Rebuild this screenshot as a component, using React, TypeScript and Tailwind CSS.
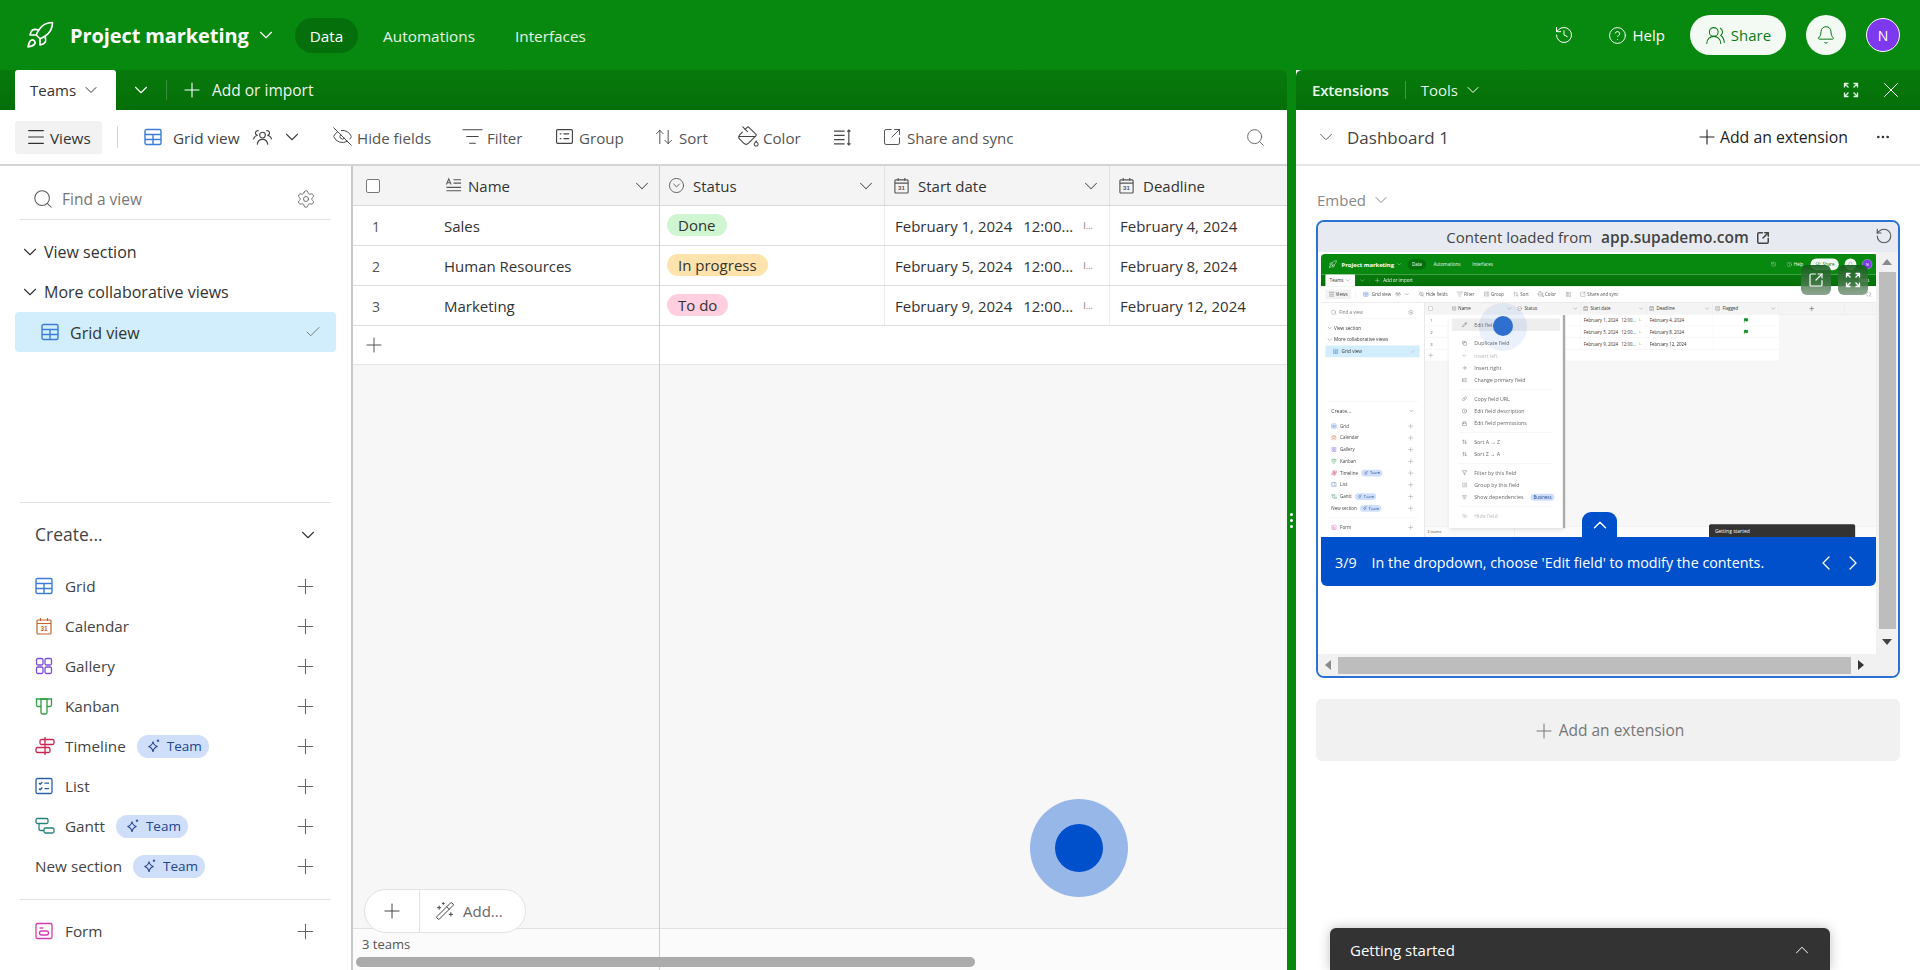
import React from "react";
import {
  Rocket, ChevronDown, ChevronUp, ChevronLeft, ChevronRight, Plus, Menu, UsersRound, EyeOff, ListFilter, ArrowUpDown, PaintBucket,
  Search, Settings, History, CircleHelp, Bell, X, Check, WandSparkles, Ellipsis, RotateCcw, CircleChevronDown, SquareArrowOutUpRight,
  Pencil, Copy, ArrowLeft, ArrowRight, Link, Info, Lock, Filter, ListTree, Flag,
} from "lucide-react";

type IP = { className?: string };

const GridIcon = ({ className }: IP) => (
  <svg viewBox="0 0 18 18" className={className} fill="none" stroke="currentColor" strokeWidth="1.4">
    <rect x="1" y="1.500" width="16" height="15" rx="1.500" />
    <path d="M1 6.500h16M1 11.500h16M9 6.500v10" />
  </svg>
);
const CalIcon = ({ className }: IP) => (
  <svg viewBox="0 0 18 18" className={className} fill="none" stroke="currentColor" strokeWidth="1.2">
    <rect x="2" y="3" width="14" height="14" rx="1" />
    <path d="M2 6.500h14M5.500 1v3M12.500 1v3" />
    <text x="9" y="14" textAnchor="middle" fontSize="6.5" fontWeight="700" fill="currentColor" stroke="none" fontFamily="Liberation Sans, sans-serif">31</text>
  </svg>
);
const GalleryIcon = ({ className }: IP) => (
  <svg viewBox="0 0 18 18" className={className} fill="none" stroke="currentColor" strokeWidth="1.3">
    <rect x="1.500" y="1.500" width="6.500" height="6.500" rx="1.500" />
    <rect x="10" y="1.500" width="6.500" height="6.500" rx="1.500" />
    <rect x="1.500" y="10" width="6.500" height="6.500" rx="1.500" />
    <rect x="10" y="10" width="6.500" height="6.500" rx="1.500" />
  </svg>
);
const KanbanIcon = ({ className }: IP) => (
  <svg viewBox="0 0 18 18" className={className} fill="none" stroke="currentColor" strokeWidth="1.3">
    <path d="M6 9.500H3A1.500 1.500 0 0 1 1.500 8V2h15v6a1.500 1.500 0 0 1-1.500 1.500h-3" />
    <path d="M6 2h6v13.500a1.500 1.500 0 0 1-1.500 1.500h-3A1.500 1.500 0 0 1 6 15.500z" />
  </svg>
);
const TimelineIcon = ({ className }: IP) => (
  <svg viewBox="0 0 20 20" className={className} fill="none" stroke="currentColor" strokeWidth="1.3">
    <path d="M10 1v18" />
    <rect x="5" y="3.500" width="14" height="5" rx="1.500" />
    <rect x="1" y="11.500" width="14" height="5" rx="1.500" />
  </svg>
);
const ListIcon = ({ className }: IP) => (
  <svg viewBox="0 0 18 18" className={className} fill="none" stroke="currentColor" strokeWidth="1.3">
    <rect x="1" y="1.500" width="16" height="15" rx="1.500" />
    <path d="M4 6l1.200 1.200L7.300 5M4 11.500l1.200 1.200 2.100-2.200M9.500 6.200h4.500M9.500 11.700h4.500" />
  </svg>
);
const GanttIcon = ({ className }: IP) => (
  <svg viewBox="0 0 20 18" className={className} fill="none" stroke="currentColor" strokeWidth="1.3">
    <rect x="1" y="1.500" width="12" height="5" rx="1.500" />
    <rect x="9" y="11" width="10" height="5" rx="1.500" />
    <path d="M4 6.500v5a2 2 0 0 0 2 2h3" />
  </svg>
);
const FormIcon = ({ className }: IP) => (
  <svg viewBox="0 0 18 18" className={className} fill="none" stroke="currentColor" strokeWidth="1.3">
    <rect x="1" y="1.500" width="16" height="15" rx="1.500" />
    <path d="M4.500 6h4" />
    <rect x="4.500" y="9" width="9" height="4" rx="2" />
  </svg>
);
const Spark = ({ className }: IP) => (
  <svg viewBox="0 0 16 16" className={className} fill="none" stroke="currentColor" strokeWidth="1.100">
    <path d="M7 3.500c.5 3 1.700 4.300 4.500 5-2.800.7-4 2-4.500 5.500-.5-3.500-1.700-4.800-4.500-5.500 2.800-.7 4-2 4.500-5z" />
    <path d="M12 1.500v2.500M10.800 2.700h2.400" />
  </svg>
);
const GroupIcon = ({ className }: IP) => (
  <svg viewBox="0 0 18 18" className={className} fill="none" stroke="currentColor" strokeWidth="1.200">
    <rect x="1.500" y="2.500" width="15" height="13" rx="1" />
    <path d="M4.500 6.500h1.500M8 6.500h5.500M4.500 11h1.500M8 11h5.500" />
  </svg>
);
const RowHeightIcon = ({ className }: IP) => (
  <svg viewBox="0 0 18 18" className={className} fill="none" stroke="currentColor" strokeWidth="1.200">
    <path d="M1 3h10M1 7h10M1 11h10M1 15h10M15 2v14M13.500 3.500L15 2l1.500 1.500M13.500 14.500L15 16l1.500-1.500" />
  </svg>
);
const TextFieldIcon = ({ className }: IP) => (
  <svg viewBox="0 0 18 18" className={className} fill="none" stroke="currentColor" strokeWidth="1.100">
    <path d="M1.500 8L4 2l2.500 6M2.500 6h3M9 3h8M9 6.500h8M1.500 11h15.500M1.500 14.500h15.500" />
  </svg>
);
const ExpandIcon = ({ className }: IP) => (
  <svg viewBox="0 0 16 16" className={className} fill="none" stroke="currentColor" strokeWidth="1.300">
    <path d="M1.500 5.500v-4h4M1.500 1.500l4 4M10.500 1.500h4v4M14.500 1.500l-4 4M1.500 10.500v4h4M1.500 14.500l4-4M14.500 10.500v4h-4M14.500 14.500l-4-4" />
  </svg>
);
const PeopleIcon = ({ className }: IP) => (
  <svg viewBox="0 0 22 18" className={className} fill="none" stroke="currentColor" strokeWidth="1.200">
    <circle cx="11" cy="7" r="3" />
    <path d="M5.500 17c.3-3.500 2.500-5.500 5.500-5.500s5.200 2 5.500 5.500" />
    <path d="M7 2.600a2.400 2.400 0 1 0-1 4.600c-2.200.3-4 1.800-4.500 4.300" />
    <path d="M15 2.600a2.400 2.400 0 1 1 1 4.600c2.200.3 4 1.800 4.500 4.300" />
  </svg>
);

const chev = "w-[22px] h-[22px] stroke-[1.2]";
const plusSide = "ml-auto w-[25px] h-[25px] stroke-[1] text-[#666] -mr-[4px]";

function TeamPill() {
  return (
    <span className="flex items-center gap-[5px] h-[23px] w-[72px] pl-[9px] rounded-full bg-[#cfdffa] text-[13.5px] text-[#23468f]">
      <Spark className="w-[16px] h-[16px] shrink-0" />
      Team
    </span>
  );
}

const createItems: { label: string; icon: React.ReactNode; team?: boolean }[] = [
  { label: "Grid", icon: <GridIcon className="w-[18px] h-[18px] text-[#3b7dd8]" /> },
  { label: "Calendar", icon: <CalIcon className="w-[18px] h-[18px] text-[#c7622c]" /> },
  { label: "Gallery", icon: <GalleryIcon className="w-[18px] h-[18px] text-[#7c4ddb]" /> },
  { label: "Kanban", icon: <KanbanIcon className="w-[18px] h-[18px] text-[#2f9e44]" /> },
  { label: "Timeline", icon: <TimelineIcon className="w-[20px] h-[20px] text-[#c92552]" />, team: true },
  { label: "List", icon: <ListIcon className="w-[18px] h-[18px] text-[#2c5fa8]" /> },
  { label: "Gantt", icon: <GanttIcon className="w-[20px] h-[18px] text-[#26847a]" />, team: true },
];

function Sidebar() {
  return (
    <aside className="w-[353px] shrink-0 border-r-2 border-[#c9c9c9] bg-white flex flex-col text-[#333]">
      <div className="mx-[20px] h-[54px] pt-[13px] border-b border-[#e3e3e3]">
        <div className="h-[40px] flex items-center pl-[12px] pr-[15px]">
          <Search className="w-[22px] h-[22px] stroke-[1.1] text-[#555]" />
          <span className="ml-[8px] pt-[1px] flex-1 text-[15.5px] text-[#777]">Find a view</span>
          <Settings className="w-[20px] h-[20px] stroke-[1.1] text-[#666]" />
        </div>
      </div>
      <div className="mt-[12px] h-[40px] flex items-center pl-[19px] text-[16px] text-[#333]">
        <ChevronDown className={chev} />
        <span className="ml-[3px]">View section</span>
      </div>
      <div className="h-[40px] flex items-center pl-[19px] text-[16px] text-[#333]">
        <ChevronDown className={chev} />
        <span className="ml-[3px]">More collaborative views</span>
      </div>
      <div className="mx-[15px] w-[321px] h-[40px] rounded-[4px] bg-[#d2eefc] flex items-center pl-[26px] pr-[14px] text-[16px]">
        <GridIcon className="w-[18px] h-[18px] text-[#3b7dd8]" />
        <span className="ml-[11px] pt-[1px] flex-1">Grid view</span>
        <Check className="w-[18px] h-[18px] stroke-[1.1] text-[#666]" />
      </div>
      <div className="flex-1" />
      <div className="mx-[20px] border-t border-[#e3e3e3]" />
      <div className="h-[63px] flex items-center justify-between pl-[35px] pr-[32px]">
        <span className="text-[17.5px] font-medium text-[#444]">Create...</span>
        <ChevronDown className={chev} />
      </div>
      {createItems.map((it) => (
        <div key={it.label} className="h-[40px] flex items-center pl-[35px] pr-[37px] text-[15.3px] text-[#444]">
          <span className="w-[30px] shrink-0">{it.icon}</span>
          <span className="mr-[11px]">{it.label}</span>
          {it.team && <TeamPill />}
          <Plus className={plusSide} />
        </div>
      ))}
      <div className="h-[40px] flex items-center pl-[35px] pr-[37px] text-[15.3px] text-[#444]">
        <span className="mr-[11px]">New section</span>
        <TeamPill />
        <Plus className={plusSide} />
      </div>
      <div className="mx-[20px] mt-[13px] border-t border-[#e3e3e3]" />
      <div className="mt-[11px] mb-[19px] h-[40px] flex items-center pl-[35px] pr-[37px] text-[15.3px] text-[#444]">
        <span className="w-[30px] shrink-0"><FormIcon className="w-[18px] h-[18px] text-[#d63bab]" /></span>
        <span>Form</span>
        <Plus className={plusSide} />
      </div>
    </aside>
  );
}

function ToolItem({ icon, label, w }: { icon: React.ReactNode; label?: string; w: string }) {
  return (
    <div className={"flex items-center shrink-0 " + w}>
      <span className="w-[24px] h-[24px] flex items-center justify-center shrink-0">{icon}</span>
      {label && <span className="ml-[3px] pt-[2px] whitespace-nowrap">{label}</span>}
    </div>
  );
}

function Toolbar() {
  const ic = "stroke-[1.1] text-[#444]";
  return (
    <div className="h-[56px] shrink-0 bg-white border-b-2 border-[#d4d4d4] flex items-center text-[15.1px] text-[#555]">
      <div className="ml-[15px] w-[87px] h-[33px] rounded-[3px] bg-[#f2f2f2] flex items-center pl-[10px] gap-[3px] text-[15.3px] text-[#333]">
        <Menu className="w-[22px] h-[22px] stroke-[1.300]" />
        <span className="pt-[2px]">Views</span>
      </div>
      <div className="ml-[15px] w-px h-[22px] bg-[#d4d4d4]" />
      <GridIcon className="ml-[26px] w-[18px] h-[18px] text-[#3b7dd8]" />
      <span className="ml-[11px] w-[70px] pt-[2px] text-[15.3px] font-medium text-[#444] whitespace-nowrap">Grid view</span>
      <PeopleIcon className="ml-[9px] w-[21px] h-[18px] text-[#444]" />
      <ChevronDown className="ml-[8px] w-[22px] h-[22px] stroke-[1.2] text-[#444]" />
      <div className="ml-[27px]" />
      <ToolItem w="w-[130px]" icon={<EyeOff className={"w-[21px] h-[21px] " + ic} />} label="Hide fields" />
      <ToolItem w="w-[92px]" icon={<ListFilter className={"w-[23px] h-[23px] " + ic} />} label="Filter" />
      <ToolItem w="w-[100px]" icon={<GroupIcon className={"w-[19px] h-[19px] " + ic} />} label="Group" />
      <ToolItem w="w-[84px]" icon={<ArrowUpDown className={"w-[20px] h-[20px] " + ic} />} label="Sort" />
      <ToolItem w="w-[94px]" icon={<PaintBucket className={"w-[23px] h-[23px] " + ic} />} label="Color" />
      <ToolItem w="w-[50px]" icon={<RowHeightIcon className={"w-[19px] h-[19px] " + ic} />} />
      <ToolItem w="w-[150px]" icon={<SquareArrowOutUpRight className={"w-[20px] h-[20px] " + ic} />} label="Share and sync" />
      <Search className="ml-auto mr-[21px] w-[21px] h-[21px] stroke-[1.1] text-[#666]" />
    </div>
  );
}

const rows = [
  { n: 1, name: "Sales", status: "Done", cls: "bg-[#cff5d1]", start: "February 1, 2024", dead: "February 4, 2024", flag: true },
  { n: 2, name: "Human Resources", status: "In progress", cls: "bg-[#ffe3ac]", start: "February 5, 2024", dead: "February 8, 2024", flag: true },
  { n: 3, name: "Marketing", status: "To do", cls: "bg-[#ffcfe0]", start: "February 9, 2024", dead: "February 12, 2024", flag: false },
];

function HeadCell({ w, icon, label }: { w: string; icon: React.ReactNode; label: string }) {
  return (
    <div className={"shrink-0 h-full flex items-center pl-[8px] pr-[7px] border-r border-[#e0e0e0] " + w}>
      {icon}
      <span className="ml-[8px] flex-1 pt-[2px] text-[#333]">{label}</span>
      <ChevronDown className="w-[22px] h-[22px] stroke-[1.1] text-[#555]" />
    </div>
  );
}

function GridTable({ mini = false }: { mini?: boolean }) {
  const ic = "w-[17px] h-[17px] text-[#555]";
  return (
    <div className="flex-1 min-w-0 flex bg-[#f7f7f7] text-[15px] text-[#333] overflow-hidden">
      <div className="w-[307px] shrink-0 flex flex-col border-r border-[#cfcfcf]">
        <div className="h-[40px] shrink-0 bg-[#f4f4f4] border-b border-[#d8d8d8] flex items-center">
          <span className="ml-[13px] w-[14px] h-[14px] rounded-[2px] border border-[#777] bg-white" />
          <span className="ml-[65px] w-[18px]"><TextFieldIcon className="w-[17px] h-[17px] text-[#555]" /></span>
          <span className="ml-[5px] flex-1 pt-[2px] text-[#333]">Name</span>
          <ChevronDown className="mr-[6px] w-[22px] h-[22px] stroke-[1.1] text-[#555]" />
        </div>
        {rows.map((r) => (
          <div key={r.n} className="h-[40px] shrink-0 bg-white border-b border-[#dedede] flex items-center">
            <span className="w-[91px] pl-[19px] pt-[1px] text-[14px] text-[#555]">{r.n}</span>
            <span className="pt-[1px]">{r.name}</span>
          </div>
        ))}
        <div className="h-[39px] shrink-0 bg-white border-b border-[#e5e5e5] flex items-center pl-[9px]">
          <Plus className="w-[24px] h-[24px] stroke-[1] text-[#555]" />
        </div>
        <div className="flex-1" />
        <div className="h-[42px] shrink-0 bg-[#fbfbfb] border-t border-[#e0e0e0] pl-[9px] pt-[6px] text-[13px] text-[#555]">3 teams</div>
      </div>
      <div className="flex-1 min-w-0 flex flex-col overflow-hidden">
        <div className="h-[40px] shrink-0 bg-[#f4f4f4] border-b border-[#d8d8d8] flex items-center">
          <HeadCell w="w-[225px]" icon={<CircleChevronDown className={ic + " stroke-[1.25]"} />} label="Status" />
          <HeadCell w="w-[225px]" icon={<CalIcon className={ic} />} label="Start date" />
          {mini ? (
            <>
              <HeadCell w="w-[225px]" icon={<CalIcon className={ic} />} label="Deadline" />
              <HeadCell w="w-[225px]" icon={<GroupIcon className={ic} />} label="Flagged" />
              <div className="w-[224px] h-full border-r border-[#e0e0e0] flex items-center justify-center"><Plus className="w-[22px] h-[22px] text-[#555]" /></div>
            </>
          ) : (
            <div className="flex items-center pl-[8px] shrink-0 w-[180px]">
              <CalIcon className={ic} />
              <span className="ml-[8px] pt-[2px]">Deadline</span>
            </div>
          )}
        </div>
        {rows.map((r) => (
          <div key={r.n} className={"h-[40px] shrink-0 bg-white border-b border-[#dedede] flex items-center " + (mini ? "w-[900px]" : "")}>
            <div className="w-[225px] h-full shrink-0 pl-[7px] pt-[8px] border-r border-[#ececec]">
              <span className={"inline-flex items-center h-[22px] px-[11px] rounded-full text-[#333] " + r.cls}>{r.status}</span>
            </div>
            <div className="w-[225px] h-full shrink-0 flex items-center pl-[10px] pt-[1px] border-r border-[#ececec] whitespace-nowrap overflow-hidden">
              <span>{r.start}</span>
              <span className="ml-[11px]">12:00...</span>
              <span className="ml-[10px] text-[9px] text-[#777]">I...</span>
            </div>
            <div className="pl-[10px] pt-[1px] whitespace-nowrap shrink-0 w-[225px]">{r.dead}</div>
            {mini && (
              <div className="w-[225px] h-full flex items-center justify-center border-l border-[#ececec]">
                {r.flag && <Flag className="w-[18px] h-[18px] text-[#0a8a1a] fill-[#0a8a1a]" />}
              </div>
            )}
          </div>
        ))}
        <div className={"h-[39px] shrink-0 bg-white border-b border-[#e5e5e5] " + (mini ? "w-[900px]" : "")} />
        <div className="flex-1" />
        <div className="h-[42px] shrink-0 bg-[#fbfbfb] border-t border-[#e0e0e0]" />
      </div>
    </div>
  );
}

function Brand() {
  return (
    <>
      <Rocket className="ml-[25px] w-[30px] h-[30px] stroke-[1.3] text-white" />
      <span className="ml-[15px] w-[180px] pt-[1px] text-[20px] font-bold tracking-[-0.1px] text-white whitespace-nowrap">Project marketing</span>
      <ChevronDown className="ml-[5px] w-[22px] h-[22px] stroke-[1.2] text-white" />
      <div className="ml-[18px] w-[63px] h-[35px] pt-[3px] rounded-full bg-[#056f0b] flex items-center justify-center text-[15.3px] text-white">Data</div>
      <span className="ml-[25px] w-[92px] pt-[2px] text-[15.3px] tracking-[0.05px] text-white/90">Automations</span>
      <span className="ml-[40px] pt-[2px] text-[15.3px] text-white/90">Interfaces</span>
    </>
  );
}

function TopRight() {
  return (
    <>
      <History className="ml-auto w-[20px] h-[20px] stroke-[1.2] text-white" />
      <CircleHelp className="ml-[34px] w-[19px] h-[19px] stroke-[1.2] text-white" />
      <span className="ml-[6px] pt-[1px] text-[15px] text-white">Help</span>
      <div className="ml-[25px] w-[96px] h-[40px] pt-[1px] rounded-full bg-[#f3f9f3] flex items-center justify-center gap-[5px] text-[15px] text-[#0b7a16]">
        <UsersRound className="w-[21px] h-[21px] stroke-[1.2]" />
        Share
      </div>
      <div className="ml-[20px] w-[40px] h-[40px] rounded-full bg-[#f3f9f3] flex items-center justify-center">
        <Bell className="w-[20px] h-[20px] stroke-[1.2] text-[#0b7a16]" />
      </div>
      <div className="ml-[20px] mr-[20px] w-[34px] h-[34px] rounded-full bg-[#7c39ed] border border-white flex items-center justify-center text-[14px] text-white">N</div>
    </>
  );
}

function SubBarLeft() {
  return (
    <>
      <div className="ml-[15px] w-[101px] h-[40px] rounded-t-[3px] bg-white flex items-center pl-[15px] text-[15px] text-[#333]">
        <span className="pt-[1px]">Teams</span>
        <ChevronDown className="ml-[5px] w-[20px] h-[20px] stroke-[1.2]" />
      </div>
      <ChevronDown className="ml-[14px] w-[22px] h-[22px] stroke-[1.2] text-white" />
      <div className="ml-[14px] w-px h-[20px] bg-white/20" />
      <Plus className="ml-[13px] w-[24px] h-[24px] stroke-[1.1] text-white" />
      <span className="ml-[8px] pt-[1px] text-[15.5px] text-white/95">Add or import</span>
    </>
  );
}

function MiniMenu() {
  const s = "w-[18px] h-[18px] shrink-0";
  const item = (ic: React.ReactNode, t: string, hl = false, extra?: React.ReactNode, dim = false) => (
    <div key={t} className={"h-[42px] flex items-center gap-[24px] px-[34px] mx-[10px] text-[18px] whitespace-nowrap rounded " + (hl ? "bg-[#eeeeee] " : "") + (dim ? "text-[#bbb]" : "text-[#666]")}>
      {ic}
      <span>{t}</span>
      {extra}
    </div>
  );
  const sep = <div className="mx-[34px] my-[10px] border-t border-[#e3e3e3]" />;
  return (
    <div className="absolute left-[436px] top-[208px] w-[396px] h-[726px] bg-white shadow-lg overflow-hidden pt-[12px] border-r-[8px] border-[#aaa]">
      {item(<Pencil className={s} />, "Edit field", true)}
      <div className="h-[21px]" />
      {item(<Copy className={s} />, "Duplicate field")}
      {item(<ArrowLeft className={s} />, "Insert left", false, undefined, true)}
      {item(<ArrowRight className={s} />, "Insert right")}
      {item(<ListTree className={s} />, "Change primary field")}
      {sep}
      {item(<Link className={s} />, "Copy field URL")}
      {item(<Info className={s} />, "Edit field description")}
      {item(<Lock className={s} />, "Edit field permissions")}
      {sep}
      {item(<ArrowUpDown className={s} />, "Sort A → Z")}
      {item(<ArrowUpDown className={s} />, "Sort Z → A")}
      {sep}
      {item(<Filter className={s} />, "Filter by this field")}
      {item(<GroupIcon className={s} />, "Group by this field")}
      {item(<ListFilter className={s} />, "Show dependencies", false,
        <span className="ml-auto h-[24px] px-[10px] rounded-full bg-[#cfdffa] text-[15px] text-[#23468f]">Business</span>)}
      {sep}
      {item(<EyeOff className={s} />, "Hide field", false, undefined, true)}
    </div>
  );
}

function MiniApp() {
  return (
    <div className="relative w-[1898px] h-[970px] origin-top-left scale-[0.2935] bg-white flex flex-col blur-[0.9px] rounded-t-[14px] overflow-hidden">
      <div className="h-[70px] shrink-0 bg-[#07880f] flex items-center">
        <Brand />
        <TopRight />
      </div>
      <div className="h-[40px] shrink-0 bg-gradient-to-b from-[#077a0c] to-[#056f08] flex items-center">
        <SubBarLeft />
        <span className="ml-auto mr-[30px] text-[15px] text-white">Tools</span>
      </div>
      <Toolbar />
      <div className="flex-1 min-h-0 flex">
        <Sidebar />
        <GridTable mini />
      </div>
      <MiniMenu />
      <div className="absolute left-[1322px] top-[921px] w-[498px] h-[49px] bg-[#333] rounded-t-[6px] text-white text-[17px] pl-[20px] pt-[10px]">Getting started</div>
    </div>
  );
}

function ExtensionsPanel() {
  return (
    <section className="w-[624px] shrink-0 flex flex-col bg-white">
      <div className="h-[40px] shrink-0 rounded-tl-[6px] bg-gradient-to-b from-[#077a0c] to-[#056f08] flex items-center text-[15px] text-white">
        <span className="ml-[16px] font-semibold tracking-[-0.15px] text-[#e9f8ea]">Extensions</span>
        <span className="ml-[16px] w-px h-[18px] bg-white/25" />
        <span className="ml-[15px] text-[#e3f3e4]">Tools</span>
        <ChevronDown className="ml-[5px] w-[20px] h-[20px] stroke-[1.2] text-white" />
        <ExpandIcon className="ml-auto w-[16px] h-[16px] text-[#dff0e0]" />
        <X className="ml-[19px] mr-[16px] w-[26px] h-[26px] stroke-[0.9] text-white" />
      </div>
      <div className="h-[56px] shrink-0 border-b-2 border-[#e6e6e6] flex items-center text-[#333]">
        <ChevronDown className="ml-[19px] w-[22px] h-[22px] stroke-[1] text-[#555]" />
        <span className="ml-[10px] pt-[2px] text-[17px] font-medium text-[#444]">Dashboard 1</span>
        <Plus className="ml-auto w-[24px] h-[24px] stroke-[1.1] text-[#222]" />
        <span className="ml-[1px] pt-[2px] text-[15.8px] font-medium text-[#222]">Add an extension</span>
        <Ellipsis className="ml-[27px] mr-[29px] w-[16px] h-[16px] text-[#333]" />
      </div>
      <div className="h-[54px] shrink-0 flex items-center pl-[21px] pt-[14px] text-[15px] text-[#888]">
        Embed
        <ChevronDown className="ml-[5px] w-[20px] h-[20px] stroke-[1.2]" />
      </div>
      <div className="relative mx-[20px] w-[584px] h-[458px] shrink-0 rounded-[8px] border-2 border-[#2a73d2] bg-white overflow-hidden flex flex-col">
        <div className="h-[30px] shrink-0 bg-[#e7ebf1] flex items-center justify-center pt-[1px] text-[15px] text-[#444] relative">
          Content loaded from<span className="ml-[9px] text-[15.5px] font-semibold">app.supademo.com</span>
          <SquareArrowOutUpRight className="ml-[7px] w-[14px] h-[14px] stroke-[2.6]" />
          <RotateCcw className="absolute right-[5px] top-[5px] w-[18px] h-[18px] stroke-[1.5] text-[#555]" />
        </div>
        <div className="flex-1 min-h-0 flex">
          <div className="w-[558px] pl-[3px] pt-[2px] shrink-0 flex flex-col">
            <div className="relative h-[283px] shrink-0 overflow-hidden">
              <MiniApp />
              <div className="absolute left-[480px] top-[11px] w-[30px] h-[30px] rounded-[6px] bg-gradient-to-b from-[#0d5c18]/90 to-[#6f8f74]/80 flex items-center justify-center">
                <SquareArrowOutUpRight className="w-[16px] h-[16px] stroke-[1.8] text-white" />
              </div>
              <div className="absolute left-[517px] top-[11px] w-[30px] h-[30px] rounded-[6px] bg-gradient-to-b from-[#0d5c18]/90 to-[#6f8f74]/80 flex items-center justify-center">
                <ExpandIcon className="w-[16px] h-[16px] text-white" />
              </div>
              <div className="absolute left-[261px] top-[258px] w-[35px] h-[25px] rounded-t-[9px] bg-[#0050cb] flex items-center justify-center">
                <ChevronUp className="w-[22px] h-[22px] stroke-[1.5] text-white" />
              </div>
              <div className="absolute left-[158px] top-[49px] w-[48px] h-[48px] rounded-full bg-[#2f73d2]/10" />
              <div className="absolute left-[172px] top-[62px] w-[20px] h-[20px] rounded-full bg-[#2f6fd0]" />
            </div>
            <div className="h-[49px] shrink-0 rounded-b-[6px] bg-[#0050cb] flex items-center pl-[14px] pt-[2px] text-[14.3px] text-white">
              <span>3/9</span>
              <span className="ml-[15px]">In the dropdown, choose 'Edit field' to modify the contents.</span>
              <ChevronLeft className="ml-auto w-[24px] h-[24px] stroke-[1.3]" />
              <ChevronRight className="ml-[3px] mr-[11px] w-[24px] h-[24px] stroke-[1.3]" />
            </div>
            <div className="flex-1" />
          </div>
          <div className="flex-1 bg-[#f1f1f1] flex flex-col items-center">
            <div className="h-[20px] w-full flex items-center justify-center"><span className="w-0 h-0 border-x-[5px] border-x-transparent border-b-[6px] border-b-[#8a8a8a]" /></div>
            <div className="w-[17px] flex-1 bg-[#bdbdbd]" />
            <div className="h-[25px] w-full flex items-center justify-center"><span className="w-0 h-0 border-x-[5px] border-x-transparent border-t-[6px] border-t-[#444]" /></div>
          </div>
        </div>
        <div className="h-[22px] shrink-0 bg-[#f1f1f1] flex items-center">
          <span className="ml-[7px] w-0 h-0 border-y-[5px] border-y-transparent border-r-[6px] border-r-[#8a8a8a]" />
          <div className="ml-[7px] w-[513px] h-[17px] bg-[#bdbdbd]" />
          <span className="ml-[7px] w-0 h-0 border-y-[5px] border-y-transparent border-l-[6px] border-l-[#333]" />
        </div>
      </div>
      <div className="mt-[21px] mx-[20px] w-[584px] h-[62px] shrink-0 rounded-[6px] bg-[#f1f1f1] flex items-center justify-center gap-[3px] pt-[1px] text-[15.5px] text-[#777]">
        <Plus className="w-[24px] h-[24px] stroke-[1]" />
        Add an extension
      </div>
    </section>
  );
}

export default function App() {
  return (
    <div className="relative w-[1920px] h-[970px] overflow-hidden bg-[#07880f] flex flex-col" style={{ fontFamily: '"Open Sans", "Noto Sans", sans-serif' }}>
      <header className="h-[70px] shrink-0 flex items-center">
        <Brand />
        <TopRight />
      </header>
      <div className="flex-1 min-h-0 flex">
        <main className="w-[1287px] shrink-0 flex flex-col relative">
          <div className="h-[40px] shrink-0 rounded-tr-[6px] bg-gradient-to-b from-[#077a0c] to-[#056f08] flex items-center">
            <SubBarLeft />
          </div>
          <Toolbar />
          <div className="flex-1 min-h-0 flex bg-white">
            <Sidebar />
            <GridTable />
          </div>
          <div className="absolute left-[364px] top-[819px] w-[162px] h-[44px] rounded-full border border-[#e2e2e2] bg-white flex items-center text-[15px] text-[#666]">
            <div className="w-[55px] h-full border-r border-[#e2e2e2] flex items-center justify-center">
              <Plus className="w-[24px] h-[24px] stroke-[1] text-[#444]" />
            </div>
            <WandSparkles className="ml-[15px] w-[20px] h-[20px] stroke-[1.2] text-[#444]" />
            <span className="ml-[8px]">Add...</span>
          </div>
          <div className="absolute left-[356px] top-[887px] w-[619px] h-[10px] rounded-full bg-[#ababab]" />
          <div className="absolute left-[1030px] top-[729px] w-[98px] h-[98px] rounded-full bg-[#97b7e9] flex items-center justify-center">
            <div className="w-[48px] h-[48px] rounded-full bg-[#0050cb]" />
          </div>
        </main>
        <div className="w-[9px] shrink-0 flex flex-col items-center justify-center gap-[3px]">
          <span className="w-[3px] h-[3px] rounded-full bg-white" />
          <span className="w-[3px] h-[3px] rounded-full bg-white" />
          <span className="w-[3px] h-[3px] rounded-full bg-white" />
        </div>
        <ExtensionsPanel />
      </div>
      <div className="absolute left-[1330px] top-[928px] w-[500px] h-[42px] rounded-t-[6px] bg-[#333] shadow-[0_0_12px_rgba(0,0,0,0.25)] flex items-center justify-between pl-[20px] pr-[17px] pt-[2px] text-[15px] text-white">
        Getting started
        <ChevronUp className="w-[22px] h-[22px] stroke-[1.1] text-[#ddd]" />
      </div>
    </div>
  );
}
